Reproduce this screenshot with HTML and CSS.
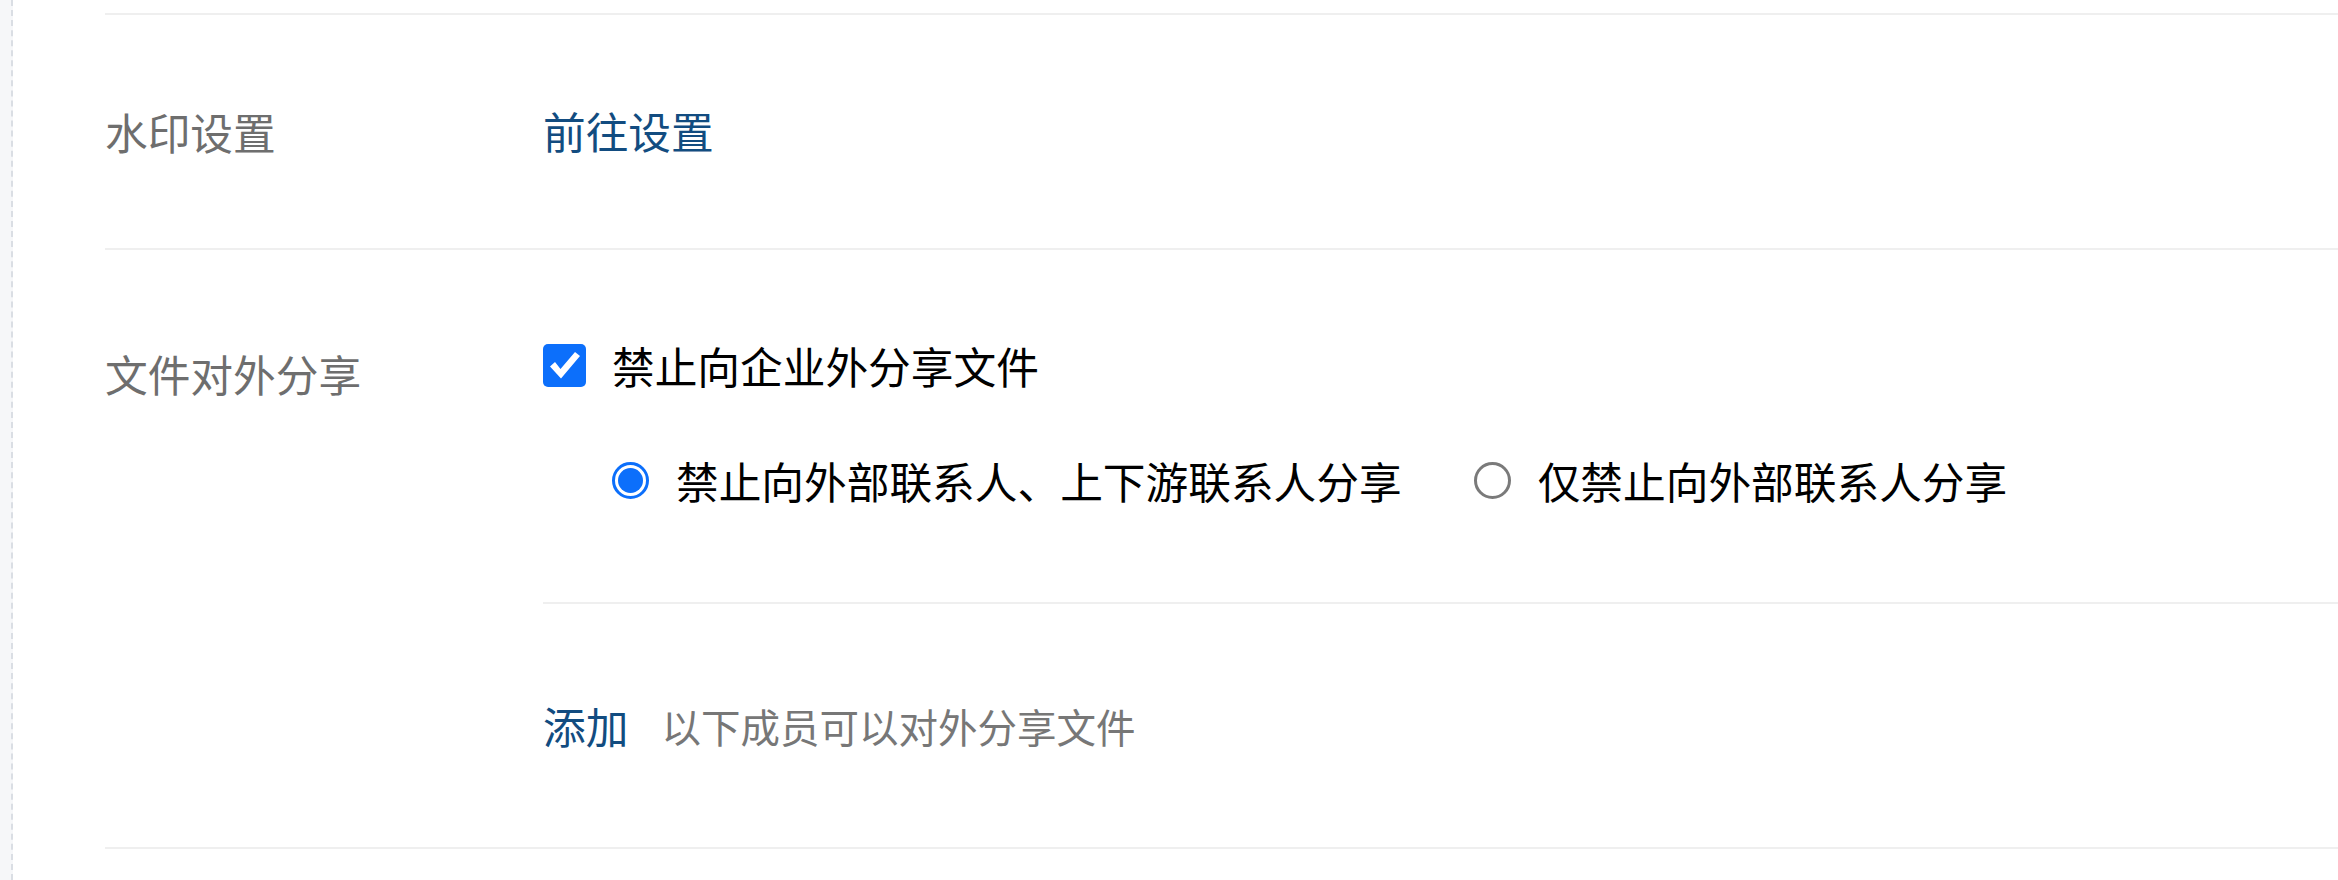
FILE: index.html
```html
<!DOCTYPE html>
<html lang="zh-CN">
<head>
<meta charset="utf-8">
<title>设置</title>
<link rel="stylesheet" href="styles.css">
</head>
<body>
<div class="page">
  <div class="gutter"></div>
  <div class="main">
    <div class="row row-watermark">
      <div class="label">水印设置</div>
      <div class="content">
        <a class="link" href="#">前往设置</a>
      </div>
    </div>
    <div class="row row-share">
      <div class="label label-top">文件对外分享</div>
      <div class="content">
        <div class="share-top">
          <div class="check-row">
            <span class="checkbox">
              <svg viewBox="0 0 43 43" width="43" height="43"><path d="M7 22.5 L12 18 L17.5 25 L32 8 L37 12 L18 34.5 Z" fill="#fff"/></svg>
            </span>
            <span class="text">禁止向企业外分享文件</span>
          </div>
          <div class="radio-row">
            <div class="radio-option">
              <span class="radio radio-on"><span class="dot"></span></span>
              <span class="text">禁止向外部联系人、上下游联系人分享</span>
            </div>
            <div class="radio-option">
              <span class="radio radio-off"></span>
              <span class="text">仅禁止向外部联系人分享</span>
            </div>
          </div>
        </div>
        <div class="add-row">
          <a class="link" href="#">添加</a>
          <span class="desc">以下成员可以对外分享文件</span>
        </div>
      </div>
    </div>
  </div>
</div>
</body>
</html>
```

FILE: styles.css
```css
html, body {
  margin: 0;
  padding: 0;
  background: #ffffff;
}
body {
  font-family: "Noto Sans CJK SC", "Noto Sans", sans-serif;
  color: #000;
}
.page {
  display: flex;
  min-height: 880px;
}
.gutter {
  width: 11px;
  flex: none;
  background: #f6f7f9;
  border-right: 2px dashed #dadee4;
}
.main {
  flex: 1;
  padding: 13px 0 0 92px;
}
.row {
  display: flex;
  border-top: 2px solid #efefef;
}
.row-share {
  border-bottom: 2px solid #efefef;
}
.label {
  width: 438px;
  flex: none;
  font-size: 42.7px;
  line-height: 1;
  color: #6e6e6e;
}
.row-watermark {
  height: 233px;
  align-items: center;
}
.label-top {
  padding-top: 102px;
}
.content {
  flex: 1;
}
.link {
  font-size: 42.7px;
  line-height: 1;
  color: #124c80;
  text-decoration: none;
}
.share-top {
  padding: 94px 0 103px;
}
.check-row {
  display: flex;
  align-items: center;
  gap: 26px;
  height: 43px;
}
.checkbox {
  width: 43px;
  height: 43px;
  border-radius: 5px;
  background: #0c6ffb;
  display: block;
  flex: none;
}
.checkbox svg {
  display: block;
}
.text {
  font-size: 42.7px;
  line-height: 1;
  color: #000;
  white-space: nowrap;
}
.radio-row {
  display: flex;
  align-items: center;
  margin-top: 75px;
  padding-left: 69px;
  height: 37px;
  gap: 72px;
}
.radio-option {
  display: flex;
  align-items: center;
  gap: 27px;
}
.radio {
  width: 37px;
  height: 37px;
  box-sizing: border-box;
  border-radius: 50%;
  flex: none;
  display: flex;
  align-items: center;
  justify-content: center;
}
.radio-on {
  border: 3px solid #0c6ffb;
}
.radio-on .dot {
  width: 25px;
  height: 25px;
  border-radius: 50%;
  background: #0c6ffb;
}
.radio-off {
  border: 3px solid #7a7a7a;
}
.add-row {
  height: 243px;
  border-top: 2px solid #efefef;
  display: flex;
  align-items: center;
  gap: 33px;
}
.desc {
  font-size: 39.5px;
  line-height: 1;
  color: #777;
}
```
